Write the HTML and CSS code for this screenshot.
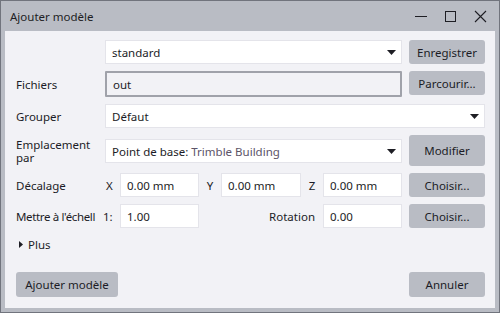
FILE: index.html
```html
<!DOCTYPE html>
<html lang="fr">
<head>
<meta charset="utf-8">
<title>Ajouter modèle</title>
<link rel="stylesheet" href="styles.css">
</head>
<body>
<div class="window">
  <div class="titlebar">
    <span class="title">Ajouter modèle</span>
    <div class="controls">
      <svg class="ctl" width="30" height="30" viewBox="0 0 30 30"><path d="M9 15.5H21" stroke="#1e1e24" stroke-width="1"/></svg>
      <svg class="ctl" width="30" height="30" viewBox="0 0 30 30"><rect x="9.5" y="10.5" width="10" height="10" fill="none" stroke="#1e1e24" stroke-width="1"/></svg>
      <svg class="ctl" width="30" height="30" viewBox="0 0 30 30"><path d="M9 10L20 21M20 10L9 21" stroke="#1e1e24" stroke-width="1.1"/></svg>
    </div>
  </div>
  <div class="client">
    <div class="form">
      <div class="label"></div>
      <div class="combo"><span>standard</span><svg class="arrow" width="9" height="5" viewBox="0 0 9 5"><path d="M0 0H9L4.5 5Z" fill="#1e1e24"/></svg></div>
      <button class="btn">Enregistrer</button>

      <div class="label">Fichiers</div>
      <div class="file"><span>out</span></div>
      <button class="btn short">Parcourir...</button>

      <div class="label">Grouper</div>
      <div class="combo wide"><span>Défaut</span><svg class="arrow" width="9" height="5" viewBox="0 0 9 5"><path d="M0 0H9L4.5 5Z" fill="#1e1e24"/></svg></div>

      <div class="label two">Emplacement par</div>
      <div class="combo mid"><span>Point de base: <span class="dim">Trimble Building</span></span><svg class="arrow" width="9" height="5" viewBox="0 0 9 5"><path d="M0 0H9L4.5 5Z" fill="#1e1e24"/></svg></div>
      <button class="btn tall">Modifier</button>

      <div class="label">Décalage</div>
      <div class="coords">
        <span class="axis first">X</span><div class="field">0.00 mm</div>
        <span class="axis">Y</span><div class="field w80">0.00 mm</div>
        <span class="axis">Z</span><div class="field">0.00 mm</div>
      </div>
      <button class="btn">Choisir...</button>

      <div class="label tight">Mettre à l'échell</div>
      <div class="coords">
        <span class="axis first ratio">1:</span><div class="field">1.00</div>
        <span class="rotlabel">Rotation</span><div class="field">0.00</div>
      </div>
      <button class="btn">Choisir...</button>
    </div>

    <div class="plus"><svg width="4" height="7" viewBox="0 0 4 7"><path d="M0 0L4 3.5L0 7Z" fill="#1e1e24"/></svg><span>Plus</span></div>

    <div class="footer">
      <button class="btn add">Ajouter modèle</button>
      <button class="btn">Annuler</button>
    </div>
  </div>
</div>
</body>
</html>
```
FILE: styles.css
```css
* { box-sizing: border-box; }
html, body { margin: 0; padding: 0; }
body {
  font-family: "Noto Sans", "Open Sans", sans-serif;
  font-size: 11.5px;
  color: #1c1c26;
  background: #b9bcc4;
}
.window {
  width: 500px;
  height: 313px;
  border: 1px solid #71747d;
  background: #b9bcc4;
  padding: 0 4px 4px 4px;
  display: flex;
  flex-direction: column;
}
.titlebar {
  height: 30px;
  display: flex;
  align-items: center;
  justify-content: space-between;
}
.title { padding-left: 5px; color: #1e1e24; }
.controls { display: flex; margin-right: -1px; }
.ctl { display: block; }
.client {
  flex: 1;
  background: #f2f2f6;
  padding: 9px 10px 11px 11px;
  display: flex;
  flex-direction: column;
}
.form {
  display: grid;
  grid-template-columns: 82px 297px 76px;
  grid-template-rows: 24px 26px 24px 31px 24px 24px;
  column-gap: 7px;
  row-gap: 7px;
}
.label {
  display: flex;
  align-items: center;
  white-space: nowrap;
}
.label.two { white-space: normal; line-height: 13px; padding-top: 1px; }
.label.tight { letter-spacing: -0.35px; }
.combo {
  background: #fff;
  border: 1px solid #e4e4ea;
  display: flex;
  align-items: center;
  justify-content: space-between;
  padding: 0 5px 0 6px;
}
.combo.wide { grid-column: 2 / 4; }
.combo.mid { align-self: center; height: 24px; margin-top: 1px; }
.arrow { display: block; }
.dim { color: #5c5468; }
.file {
  border: 2px solid #a0a2aa;
  border-radius: 1px;
  background: #f2f2f6;
  display: flex;
  align-items: center;
  padding-left: 6px;
}
.btn {
  font: inherit;
  color: #1c1c26;
  background: #b9bcc4;
  border: none;
  border-radius: 3px;
  padding: 0;
  height: 24px;
}
.btn.short { align-self: start; }
.btn.tall { height: 31px; }
.coords { display: flex; align-items: stretch; }
.axis {
  width: 22px;
  display: flex;
  align-items: center;
  justify-content: center;
}
.axis.first { width: 15px; justify-content: flex-start; padding-left: 1px; }
.axis.ratio { margin-left: -2px; width: 17px; padding-left: 0; }
.field {
  width: 79px;
  background: #fff;
  border: 1px solid #e4e4ea;
  display: flex;
  align-items: center;
  padding-left: 6px;
}
.field.w80 { width: 80px; }
.rotlabel {
  flex: 1;
  display: flex;
  align-items: center;
  justify-content: flex-end;
  padding-right: 8px;
}
.plus {
  margin-top: 9px;
  height: 14px;
  display: flex;
  align-items: center;
  padding-left: 3px;
}
.plus svg { display: block; margin-right: 5px; }
.footer {
  margin-top: auto;
  display: flex;
  justify-content: space-between;
}
.footer .btn { height: 25px; width: 76px; }
.footer .btn.add { width: 102px; }
```
